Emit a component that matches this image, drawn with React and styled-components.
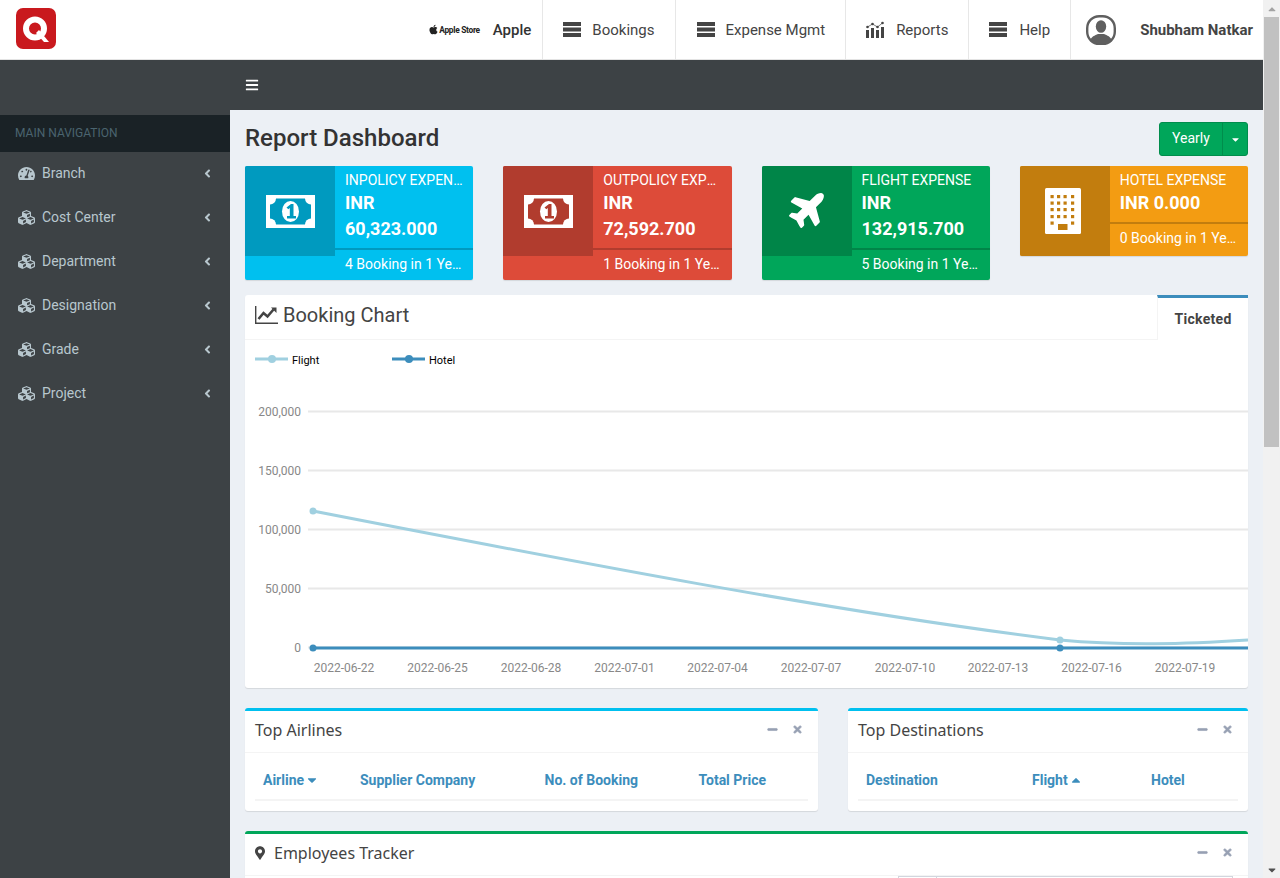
import styled, { createGlobalStyle } from "styled-components"
import { FaApple, FaPlane, FaMapMarkerAlt, FaTachometerAlt, FaCubes, FaAngleLeft, FaBars, FaMinus, FaTimes, FaCaretDown, FaCaretUp } from "react-icons/fa"

const GlobalStyle = createGlobalStyle`
  html, body {
    margin: 0;
    padding: 0;
    height: 100%;
    overflow: hidden;
    background: #ecf0f5;
    font-family: "Roboto", "Liberation Sans", sans-serif;
    font-size: 14px;
    color: #333;
  }
  * { box-sizing: border-box; }
`

const Window = styled.div`
  display: flex;
  width: 1280px;
  height: 878px;
  overflow: hidden;
`
const Page = styled.div`
  flex: 1;
  min-width: 0;
  display: flex;
  flex-direction: column;
`
const ScrollTrack = styled.div`
  width: 17px;
  flex: none;
  background: #f1f1f1;
  display: flex;
  flex-direction: column;
  align-items: center;
`
const ScrollArrow = styled.div`
  height: 17px;
  flex: none;
  display: flex;
  align-items: center;
  justify-content: center;
  color: ${p => p.$dark ? "#505050" : "#a3a3a3"};
  font-size: 12px;
`
const ScrollThumb = styled.div`
  width: 15px;
  height: 430px;
  background: #c1c1c1;
`
const ScrollRest = styled.div`
  flex: 1;
`

const Header = styled.header`
  height: 60px;
  flex: none;
  background: #fff;
  border-bottom: 1px solid #e3e3e3;
  display: flex;
  align-items: stretch;
  padding-left: 15px;
`
const Logo = styled.div`
  margin-top: 8px;
  width: 42px;
  height: 42px;
`
const Nav = styled.nav`
  margin-left: auto;
  display: flex;
  align-items: stretch;
`
const CompanyItem = styled.div`
  display: flex;
  align-items: center;
  padding-right: 11px;
`
const AppleStore = styled.span`
  display: flex;
  align-items: center;
  font-size: 8.4px;
  font-weight: 700;
  letter-spacing: -0.3px;
  color: #222;
  margin-right: 13px;
  svg { font-size: 11px; }
`
const CompanyName = styled.span`
  font-size: 15px;
  font-weight: 500;
  color: #333;
`
const NavItem = styled.div`
  display: flex;
  align-items: center;
  gap: ${p => p.$gap || 11}px;
  padding: ${p => p.$pad || "0 20px"};
  border-left: 1px solid #e7e7e7;
  font-size: 15px;
  color: #444;
`
const UserItem = styled.div`
  display: flex;
  align-items: center;
  border-left: 1px solid #e7e7e7;
  padding: 0 10px 0 15px;
  gap: 24px;
  font-size: 15px;
  font-weight: 700;
  color: #444;
`

const Body = styled.div`
  flex: 1;
  min-height: 0;
  display: flex;
`
const Sidebar = styled.aside`
  width: 230px;
  flex: none;
  background: #3d4245;
  padding-top: 55px;
`
const SideHeader = styled.div`
  height: 37px;
  background: #1a2226;
  color: #4b646f;
  font-size: 12px;
  display: flex;
  align-items: center;
  padding: 0 0 1px 15px;
`
const SideItem = styled.div`
  height: 44px;
  display: flex;
  align-items: center;
  padding: 0 16px 2px 18px;
  color: #b8c7ce;
  font-size: 14px;
  svg:first-child { width: 17px; font-size: 17px; margin-right: 7px; }
  svg:last-child { margin-left: auto; font-size: 13px; }
`

const Main = styled.main`
  flex: 1;
  min-width: 0;
  display: flex;
  flex-direction: column;
`
const TopBar = styled.div`
  height: 50px;
  flex: none;
  background: #3d4245;
  display: flex;
  align-items: center;
  padding-left: 15px;
  color: #fff;
  font-size: 14px;
`
const Content = styled.div`
  flex: 1;
  min-height: 0;
  overflow: hidden;
  padding: 12px 15px 0;
  background: #ecf0f5;
`
const TitleRow = styled.div`
  display: flex;
  justify-content: space-between;
  align-items: flex-start;
  height: 34px;
  margin-bottom: 10px;
`
const PageTitle = styled.h1`
  margin: 0;
  font-size: 24px;
  line-height: 32px;
  font-weight: 500;
  color: #333;
`
const ButtonGroup = styled.div`
  display: flex;
  height: 34px;
  background: #00a65a;
  border: 1px solid #008d4c;
  border-radius: 3px;
  color: #fff;
  font-size: 14px;
`
const ButtonLabel = styled.div`
  width: 62px;
  display: flex;
  align-items: center;
  justify-content: center;
  padding-bottom: 2px;
`
const ButtonCaret = styled.div`
  width: 25px;
  display: flex;
  align-items: center;
  justify-content: center;
  border-left: 1px solid #008d4c;
  font-size: 11px;
`

const Cards = styled.div`
  display: grid;
  grid-template-columns: repeat(4, 1fr);
  gap: 30px;
  align-items: start;
  margin-bottom: 15px;
`
const Card = styled.div`
  display: flex;
  align-items: flex-start;
  background: ${p => p.$color};
  border-radius: 2px;
  box-shadow: 0 1px 1px rgba(0, 0, 0, 0.1);
  color: #fff;
  overflow: hidden;
`
const CardIcon = styled.div`
  width: 90px;
  height: 90px;
  flex: none;
  background: ${p => p.$color};
  display: flex;
  align-items: center;
  justify-content: center;
`
const PlaneIcon = styled(FaPlane)`
  font-size: 40px;
  transform: translate(2px, -3px) rotate(-45deg);
`
const BuildingSvg = styled.svg`
  margin-right: 4px;
`
const CardBody = styled.div`
  flex: 1;
  min-width: 0;
  padding-top: 5px;
`
const CardTitle = styled.div`
  padding: 0 10px;
  font-size: 14px;
  line-height: 19px;
  text-transform: uppercase;
  white-space: nowrap;
  overflow: hidden;
  text-overflow: ellipsis;
`
const CardValue = styled.div`
  padding: 0 10px;
  font-size: 18px;
  font-weight: 700;
  line-height: 26px;
`
const CardBar = styled.div`
  height: 2px;
  margin: 6px 0 4px;
  background: ${p => p.$color};
`
const CardNote = styled.div`
  padding: 0 10px;
  margin-bottom: 6px;
  font-size: 14px;
  line-height: 20px;
  white-space: nowrap;
  overflow: hidden;
  text-overflow: ellipsis;
`

const ChartCard = styled.section`
  background: #fff;
  border-radius: 3px;
  box-shadow: 0 1px 1px rgba(0, 0, 0, 0.1);
  margin-bottom: 20px;
`
const ChartHeader = styled.div`
  height: 45px;
  display: flex;
`
const ChartTitle = styled.div`
  flex: 1;
  display: flex;
  align-items: center;
  gap: 5px;
  padding: 0 0 4px 10px;
  border-bottom: 1px solid #f4f4f4;
  font-size: 20px;
  color: #444;
`
const Tab = styled.div`
  width: 91px;
  border-top: 3px solid #3c8dbc;
  border-left: 1px solid #f4f4f4;
  display: flex;
  align-items: center;
  justify-content: center;
  font-size: 14px;
  font-weight: 700;
  letter-spacing: 0.3px;
  color: #444;
`
const ChartSvg = styled.svg`
  display: block;
  font-family: "Roboto", "Liberation Sans", sans-serif;
`

const Columns = styled.div`
  display: grid;
  grid-template-columns: 573fr 400fr;
  gap: 30px;
  margin-bottom: 20px;
`
const Box = styled.section`
  background: #fff;
  border-top: 3px solid ${p => p.$color};
  border-radius: 3px;
  box-shadow: 0 1px 1px rgba(0, 0, 0, 0.1);
`
const BoxHeader = styled.div`
  height: 42px;
  display: flex;
  align-items: center;
  padding: 0 15px 4px 10px;
  border-bottom: 1px solid #f4f4f4;
`
const BoxTitle = styled.h3`
  margin: 0;
  display: flex;
  align-items: center;
  gap: 9px;
  font-family: "Noto Sans", sans-serif;
  font-size: 16px;
  font-weight: 400;
  color: #444;
  svg { width: 10px; height: 16px; }
`
const BoxTools = styled.div`
  margin-left: auto;
  display: flex;
  align-items: center;
  gap: 14px;
  color: #97a0b3;
  font-size: 11px;
  svg { stroke: currentColor; stroke-width: 30; }
`
const BoxBody = styled.div`
  padding: 10px;
`
const TableHead = styled.div`
  display: grid;
  grid-template-columns: ${p => p.$cols};
  height: 38px;
  border-bottom: 2px solid #f4f4f4;
  align-items: center;
  padding-bottom: 2px;
`
const HeadCell = styled.div`
  padding-left: 8px;
  display: flex;
  align-items: center;
  gap: 1px;
  font-size: 14px;
  font-weight: 700;
  color: #3c8dbc;
  svg { font-size: 14px; }
`
const TrackerMap = styled.div`
  height: 40px;
  margin: 0 15px 0 653px;
  border: 1px solid #d2d6de;
  display: flex;
`
const TrackerCell = styled.div`
  width: 38px;
  border-right: 1px solid #d2d6de;
`

function Hamburger() {
  return (
    <svg width="18" height="15" viewBox="0 0 18 15" fill="#444">
      <rect width="18" height="4" />
      <rect y="5.5" width="18" height="4" />
      <rect y="11" width="18" height="4" />
    </svg>
  )
}

function ReportsIcon() {
  return (
    <svg width="18" height="17" viewBox="0 0 18 17" fill="#444">
      <polyline points="1.5,6 6.500,3 11.500,6 16.500,2" fill="none" stroke="#444" strokeWidth="0.7" />
      <rect x="0" y="9" width="3" height="8" />
      <rect x="5" y="7" width="3" height="10" />
      <rect x="10" y="9" width="3" height="8" />
      <rect x="15" y="6" width="3" height="11" />
      <circle cx="1.5" cy="6" r="1.3" />
      <circle cx="6.5" cy="3" r="1.3" />
      <circle cx="11.5" cy="6" r="1.3" />
      <circle cx="16.5" cy="2" r="1.3" />
    </svg>
  )
}

function UserIcon() {
  return (
    <svg width="30" height="30" viewBox="0 0 30 30">
      <rect x="1.2" y="1.2" width="27.6" height="27.6" rx="12" fill="#fff" stroke="#5f5f5f" strokeWidth="2.4" />
      <ellipse cx="15" cy="11.5" rx="5.2" ry="6.3" fill="#5f5f5f" />
      <path d="M4 26c1-4.5 5-5.6 8-7h6c3 1.4 7 2.5 8 7-2.500 2-6 2.800-11 2.800S6.500 28 4 26z" fill="#5f5f5f" />
    </svg>
  )
}

function LineChartIcon() {
  return (
    <svg width="23" height="18" viewBox="0 0 23 18">
      <path d="M0.700 0v17.300H23" fill="none" stroke="#444" strokeWidth="1.400" />
      <path d="M3.500 13l5-6 4 3.500 6-7" fill="none" stroke="#444" strokeWidth="2.600" />
      <path d="M16 1.500h5.500V7z" fill="#444" />
    </svg>
  )
}

function QLogo() {
  return (
    <svg width="42" height="42" viewBox="0 0 42 42">
      <rect x="1" y="0" width="40" height="41" rx="7" fill="#c9191e" />
      <circle cx="20" cy="20.500" r="9" fill="none" stroke="#fff" strokeWidth="6" />
      <path d="M21 25l3-3 10 12h-5z" fill="#fff" />
    </svg>
  )
}

function MoneyIcon({ color }) {
  return (
    <svg width="49" height="33" viewBox="0 0 49 33">
      <rect width="49" height="33" rx="1" fill="#fff" />
      <rect x="4" y="3.500" width="41" height="26" fill={color} />
      <circle cx="4" cy="3.500" r="6" fill="#fff" />
      <circle cx="45" cy="3.500" r="6" fill="#fff" />
      <circle cx="4" cy="29.500" r="6" fill="#fff" />
      <circle cx="45" cy="29.500" r="6" fill="#fff" />
      <ellipse cx="24.500" cy="16.500" rx="8.500" ry="10.500" fill="#fff" />
      <path d="M20.500 12.500l4.500-3.500h2.500v12h2.500v2.500h-9v-2.500h2.800v-8l-1.500 1.200z" fill={color} />
    </svg>
  )
}

function BuildingIcon({ color }) {
  const cols = [5.5, 12, 18.5, 26]
  const rows = [7, 13.5, 20, 27, 33.5]
  return (
    <BuildingSvg width="36" height="46" viewBox="0 0 36 46">
      <rect width="36" height="46" rx="1.500" fill="#fff" />
      {rows.map((y, r) =>
        cols.map((x, c) =>
          r === 4 && (c === 1 || c === 2) ? null : <rect key={x + "-" + y} x={x} y={y} width="3.200" height="3.200" fill={color} />
        )
      )}
      <rect x="13" y="36" width="9.500" height="6" fill={color} />
    </BuildingSvg>
  )
}

const yLabels = [
  { y: 71.5, label: "200,000" },
  { y: 130.5, label: "150,000" },
  { y: 189.5, label: "100,000" },
  { y: 248.5, label: "50,000" },
  { y: 307.5, label: "0" },
]
const xLabels = [
  { x: 99, label: "2022-06-22" },
  { x: 192.5, label: "2022-06-25" },
  { x: 286, label: "2022-06-28" },
  { x: 379.5, label: "2022-07-01" },
  { x: 472.5, label: "2022-07-04" },
  { x: 566, label: "2022-07-07" },
  { x: 660, label: "2022-07-10" },
  { x: 753, label: "2022-07-13" },
  { x: 846.5, label: "2022-07-16" },
  { x: 940, label: "2022-07-19" },
]

function BookingChart() {
  return (
    <ChartSvg width="1003" height="348" viewBox="0 0 1003 348">
      <line x1="10" y1="19" x2="43" y2="19" stroke="#a0d0e0" strokeWidth="3" />
      <circle cx="27" cy="19" r="4" fill="#a0d0e0" />
      <text x="47" y="23.500" fontSize="11" fill="#000">Flight</text>
      <line x1="147" y1="19" x2="180" y2="19" stroke="#3c8dbc" strokeWidth="3" />
      <circle cx="164" cy="19" r="4" fill="#3c8dbc" />
      <text x="184" y="23.500" fontSize="11" fill="#000">Hotel</text>
      {yLabels.map(t => (
        <g key={t.label}>
          <line x1="63" y1={t.y} x2="1003" y2={t.y} stroke="#e8e8e8" strokeWidth="2" />
          <text x="56" y={t.y + 4} textAnchor="end" fontSize="12" fill="#888">{t.label}</text>
        </g>
      ))}
      {xLabels.map(t => (
        <text key={t.label} x={t.x} y="331.500" textAnchor="middle" fontSize="12" fill="#888">{t.label}</text>
      ))}
      <path d="M68 171C330 222 590 272 815 300C880 306 940 304 1003 300" fill="none" stroke="#a0d0e0" strokeWidth="3" />
      <line x1="68" y1="308" x2="1003" y2="308" stroke="#3c8dbc" strokeWidth="3" />
      <circle cx="68" cy="171" r="3.500" fill="#a0d0e0" />
      <circle cx="815" cy="300" r="3.500" fill="#a0d0e0" />
      <circle cx="68" cy="308" r="3.500" fill="#3c8dbc" />
      <circle cx="815" cy="308" r="3.500" fill="#3c8dbc" />
    </ChartSvg>
  )
}

const navItems = [
  { label: "Bookings", icon: <Hamburger /> },
  { label: "Expense Mgmt", icon: <Hamburger />, pad: "0 20px 0 21px" },
  { label: "Reports", icon: <ReportsIcon />, gap: 12 },
  { label: "Help", icon: <Hamburger />, gap: 12 },
]

const sideItems = ["Cost Center", "Department", "Designation", "Grade", "Project"]

const cards = [
  { title: "Inpolicy Expense", value: "INR 60,323.000", note: "4 Booking in 1 Year", color: "#00c0ef", dark: "#009abf", icon: "money" },
  { title: "Outpolicy Expense", value: "INR 72,592.700", note: "1 Booking in 1 Year", color: "#dd4b39", dark: "#b13c2e", icon: "money" },
  { title: "Flight Expense", value: "INR 132,915.700", note: "5 Booking in 1 Year", color: "#00a65a", dark: "#008548", icon: "plane" },
  { title: "Hotel Expense", value: "INR 0.000", note: "0 Booking in 1 Year", color: "#f39c12", dark: "#c27d0e", icon: "hotel" },
]

function CardGlyph({ card }) {
  if (card.icon === "plane") return <PlaneIcon />
  if (card.icon === "hotel") return <BuildingIcon color={card.dark} />
  return <MoneyIcon color={card.dark} />
}

function Tools() {
  return (
    <BoxTools>
      <FaMinus />
      <FaTimes />
    </BoxTools>
  )
}

function App() {
  return (
    <Window>
      <GlobalStyle />
      <Page>
        <Header>
          <Logo><QLogo /></Logo>
          <Nav>
            <CompanyItem>
              <AppleStore><FaApple />Apple Store</AppleStore>
              <CompanyName>Apple</CompanyName>
            </CompanyItem>
            {navItems.map(item => (
              <NavItem key={item.label} $gap={item.gap} $pad={item.pad}>
                {item.icon}
                {item.label}
              </NavItem>
            ))}
            <UserItem>
              <UserIcon />
              Shubham Natkar
            </UserItem>
          </Nav>
        </Header>
        <Body>
          <Sidebar>
            <SideHeader>MAIN NAVIGATION</SideHeader>
            <SideItem>
              <FaTachometerAlt />
              Branch
              <FaAngleLeft />
            </SideItem>
            {sideItems.map(label => (
              <SideItem key={label}>
                <FaCubes />
                {label}
                <FaAngleLeft />
              </SideItem>
            ))}
          </Sidebar>
          <Main>
            <TopBar><FaBars /></TopBar>
            <Content>
              <TitleRow>
                <PageTitle>Report Dashboard</PageTitle>
                <ButtonGroup>
                  <ButtonLabel>Yearly</ButtonLabel>
                  <ButtonCaret><FaCaretDown /></ButtonCaret>
                </ButtonGroup>
              </TitleRow>
              <Cards>
                {cards.map(card => (
                  <Card key={card.title} $color={card.color}>
                    <CardIcon $color={card.dark}><CardGlyph card={card} /></CardIcon>
                    <CardBody>
                      <CardTitle>{card.title}</CardTitle>
                      <CardValue>{card.value}</CardValue>
                      <CardBar $color={card.dark} />
                      <CardNote>{card.note}</CardNote>
                    </CardBody>
                  </Card>
                ))}
              </Cards>
              <ChartCard>
                <ChartHeader>
                  <ChartTitle><LineChartIcon />Booking Chart</ChartTitle>
                  <Tab>Ticketed</Tab>
                </ChartHeader>
                <BookingChart />
              </ChartCard>
              <Columns>
                <Box $color="#00c0ef">
                  <BoxHeader>
                    <BoxTitle>Top Airlines</BoxTitle>
                    <Tools />
                  </BoxHeader>
                  <BoxBody>
                    <TableHead $cols="97px 184.5px 154px 1fr">
                      <HeadCell>Airline <FaCaretDown /></HeadCell>
                      <HeadCell>Supplier Company</HeadCell>
                      <HeadCell>No. of Booking</HeadCell>
                      <HeadCell>Total Price</HeadCell>
                    </TableHead>
                  </BoxBody>
                </Box>
                <Box $color="#00c0ef">
                  <BoxHeader>
                    <BoxTitle>Top Destinations</BoxTitle>
                    <Tools />
                  </BoxHeader>
                  <BoxBody>
                    <TableHead $cols="166px 119px 1fr">
                      <HeadCell>Destination</HeadCell>
                      <HeadCell>Flight <FaCaretUp /></HeadCell>
                      <HeadCell>Hotel</HeadCell>
                    </TableHead>
                  </BoxBody>
                </Box>
              </Columns>
              <Box $color="#00a65a">
                <BoxHeader>
                  <BoxTitle><FaMapMarkerAlt />Employees Tracker</BoxTitle>
                  <Tools />
                </BoxHeader>
                <TrackerMap><TrackerCell /></TrackerMap>
              </Box>
            </Content>
          </Main>
        </Body>
      </Page>
      <ScrollTrack>
        <ScrollArrow><FaCaretUp /></ScrollArrow>
        <ScrollThumb />
        <ScrollRest />
        <ScrollArrow $dark><FaCaretDown /></ScrollArrow>
      </ScrollTrack>
    </Window>
  )
}

export default App
